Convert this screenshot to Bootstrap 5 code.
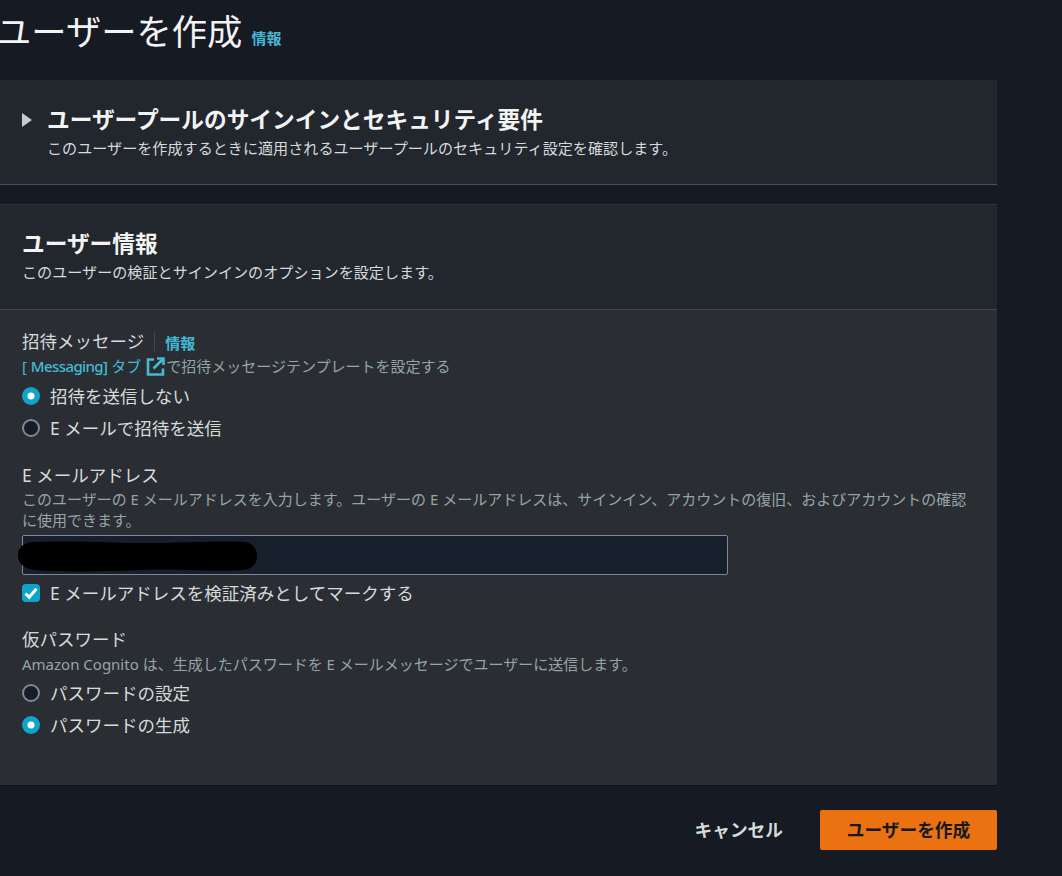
<!DOCTYPE html>
<html lang="ja">
<head>
<meta charset="utf-8">
<title>ユーザーを作成</title>
<link href="https://cdn.jsdelivr.net/npm/bootstrap@5.3.0/dist/css/bootstrap.min.css" rel="stylesheet">
<style>
html,body{height:100%;}
body{background:#161a22;color:#d5dbdb;font-family:"Noto Sans","Noto Sans CJK JP",sans-serif;font-size:17.5px;overflow:hidden;width:1062px;height:876px;}
.pagewrap{width:997px;}
.ptitle{font-size:35.3px;font-weight:400;line-height:44px;margin:9px 0 27px -4px;color:#f2f3f3;display:flex;align-items:flex-end;gap:9px;white-space:nowrap;}
.infolink{color:#44b9d6;font-size:15px;font-weight:700;text-decoration:none;line-height:20px;}
.ptitle .infolink{margin-bottom:5px;}
.fieldlabel .infolink{margin-top:3px;}
.panel{background:#2a2e33;box-shadow:0 -1px 0 #2e333a,0 1px 0 #111;}
.panelhead{background:#22272e;padding:24px 22px 27px;}
.panelhead .sechead{margin-bottom:3px;}
.collapsedpanel{background:#22262d;height:105px;border-bottom:1px solid #4a4f55;margin-bottom:20px;padding:25px 22px 0;display:flex;gap:15px;}
.collapsedpanel .sechead{margin-bottom:3px;}
.caret{width:0;height:0;border-left:10px solid #c8cccc;border-top:7px solid transparent;border-bottom:7px solid transparent;margin-top:8px;}
.sechead{font-size:22.7px;font-weight:700;line-height:30px;color:#f2f3f3;margin:0;white-space:nowrap;}
.secdesc{font-size:15.1px;line-height:20px;color:#d5dbdb;margin:0;white-space:nowrap;}
.panelbody{border-top:1px solid #414750;padding:19px 22px 44px;}
.fieldlabel{line-height:24px;color:#d5dbdb;display:flex;align-items:center;margin-bottom:2px;}
.labelsep{display:inline-block;width:1px;height:20px;background:#414750;margin:0 10px 0 10px;}
.hintline{font-size:15px;line-height:21px;color:#95a5a6;white-space:nowrap;}
.hintlead{margin:3px 0 4px;line-height:20px;}
.hinttight{margin-bottom:3px;}
.hintline a{color:#44b9d6;text-decoration:none;}
.msgword{letter-spacing:-.6px;font-weight:500;}
.ext{width:19px;height:19px;vertical-align:-4px;margin:0 1px 0 1px;}
.optrow{display:flex;align-items:center;gap:10px;height:32px;margin:0;padding:0;line-height:24px;color:#d5dbdb;min-height:0;}
.optrow .form-check-input{width:18px;height:18px;margin:0;float:none;background-color:#161d29;border:2px solid #7d8998;flex:none;}
.optrow .form-check-input:checked{background-color:#0ea5c9;border-color:#0ea5c9;}
.optrow .form-check-input:focus{box-shadow:none;}
.optrow .form-check-input[type=checkbox]:checked{background-origin:border-box;background-size:18px 18px;background-image:url("data:image/svg+xml,%3Csvg xmlns='http://www.w3.org/2000/svg' viewBox='0 0 18 18'%3E%3Cpath fill='none' stroke='%23fff' stroke-width='3' d='M3.5 9.5l3.7 3.7L14.5 4.8'/%3E%3C/svg%3E");}
.gapafter{margin-bottom:19px;}
.gapless{margin-bottom:18px;}
.mailinput{position:relative;height:40px;margin:4px 0 2px;width:706px;}
.mailinput .form-control{height:40px;background:#161f2b;border:1px solid #7d8998;border-radius:2px;}
.redact{position:absolute;left:-4px;top:5px;width:240px;height:32px;}
.footrow{display:flex;justify-content:flex-end;align-items:center;gap:37px;margin-top:25px;}
.cancelbtn{color:#d5dbdb;font-weight:700;font-size:17.7px;padding:0;border:0;background:none;}
.createbtn{background:#ec7211;color:#16191f;font-weight:700;font-size:17.7px;width:177px;height:40px;padding:0;border:0;border-radius:2px;}
</style>
</head>
<body>
<div class="pagewrap">
  <h1 class="ptitle"><span>ユーザーを作成</span><a class="infolink" href="#">情報</a></h1>

  <section class="collapsedpanel">
    <span class="caret"></span>
    <div>
      <h2 class="sechead">ユーザープールのサインインとセキュリティ要件</h2>
      <p class="secdesc">このユーザーを作成するときに適用されるユーザープールのセキュリティ設定を確認します。</p>
    </div>
  </section>

  <section class="panel">
    <div class="panelhead">
      <h2 class="sechead">ユーザー情報</h2>
      <p class="secdesc">このユーザーの検証とサインインのオプションを設定します。</p>
    </div>
    <div class="panelbody">
      <div class="fieldlabel">招待メッセージ<span class="labelsep"></span><a class="infolink" href="#">情報</a></div>
      <div class="hintline hintlead"><a href="#">[ <span class="msgword">Messaging]</span> タブ <svg class="ext" viewBox="0 0 19 19" fill="none" stroke="#44b9d6" stroke-width="2.6"><path d="M8 2.5H2v15h15v-6"/><path d="M7.5 11.5 17 2"/><path d="M11 1.5h6.5V8"/></svg></a>で招待メッセージテンプレートを設定する</div>
      <div class="gapafter">
        <label class="optrow form-check"><input class="form-check-input" type="radio" name="inv" checked>招待を送信しない</label>
        <label class="optrow form-check"><input class="form-check-input" type="radio" name="inv">E メールで招待を送信</label>
      </div>

      <div class="fieldlabel">E メールアドレス</div>
      <div class="hintline">このユーザーの E メールアドレスを入力します。ユーザーの E メールアドレスは、サインイン、アカウントの復旧、およびアカウントの確認<br>に使用できます。</div>
      <div class="mailinput">
        <input class="form-control" type="text" aria-label="E メールアドレス">
        <svg class="redact" viewBox="0 0 242 33" preserveAspectRatio="none"><path fill="#000" d="M14 2C60 0 110 4 150 3 180 2 215 1 228 2 238 3 241 10 241 17 241 25 236 30 226 31 190 33 160 29 120 31 85 33 40 33 18 31 6 30 0 24 0 16 0 8 5 3 14 2Z"/></svg>
      </div>
      <label class="optrow form-check gapless"><input class="form-check-input rounded-1" type="checkbox" checked>E メールアドレスを検証済みとしてマークする</label>

      <div class="fieldlabel">仮パスワード</div>
      <div class="hintline hintlead hinttight">Amazon Cognito は、生成したパスワードを E メールメッセージでユーザーに送信します。</div>
      <label class="optrow form-check"><input class="form-check-input" type="radio" name="pw">パスワードの設定</label>
      <label class="optrow form-check"><input class="form-check-input" type="radio" name="pw" checked>パスワードの生成</label>
    </div>
  </section>

  <div class="footrow">
    <button class="cancelbtn" type="button">キャンセル</button>
    <button class="createbtn" type="button">ユーザーを作成</button>
  </div>
</div>
<script src="https://cdn.jsdelivr.net/npm/bootstrap@5.3.0/dist/js/bootstrap.bundle.min.js"></script>
</body>
</html>
